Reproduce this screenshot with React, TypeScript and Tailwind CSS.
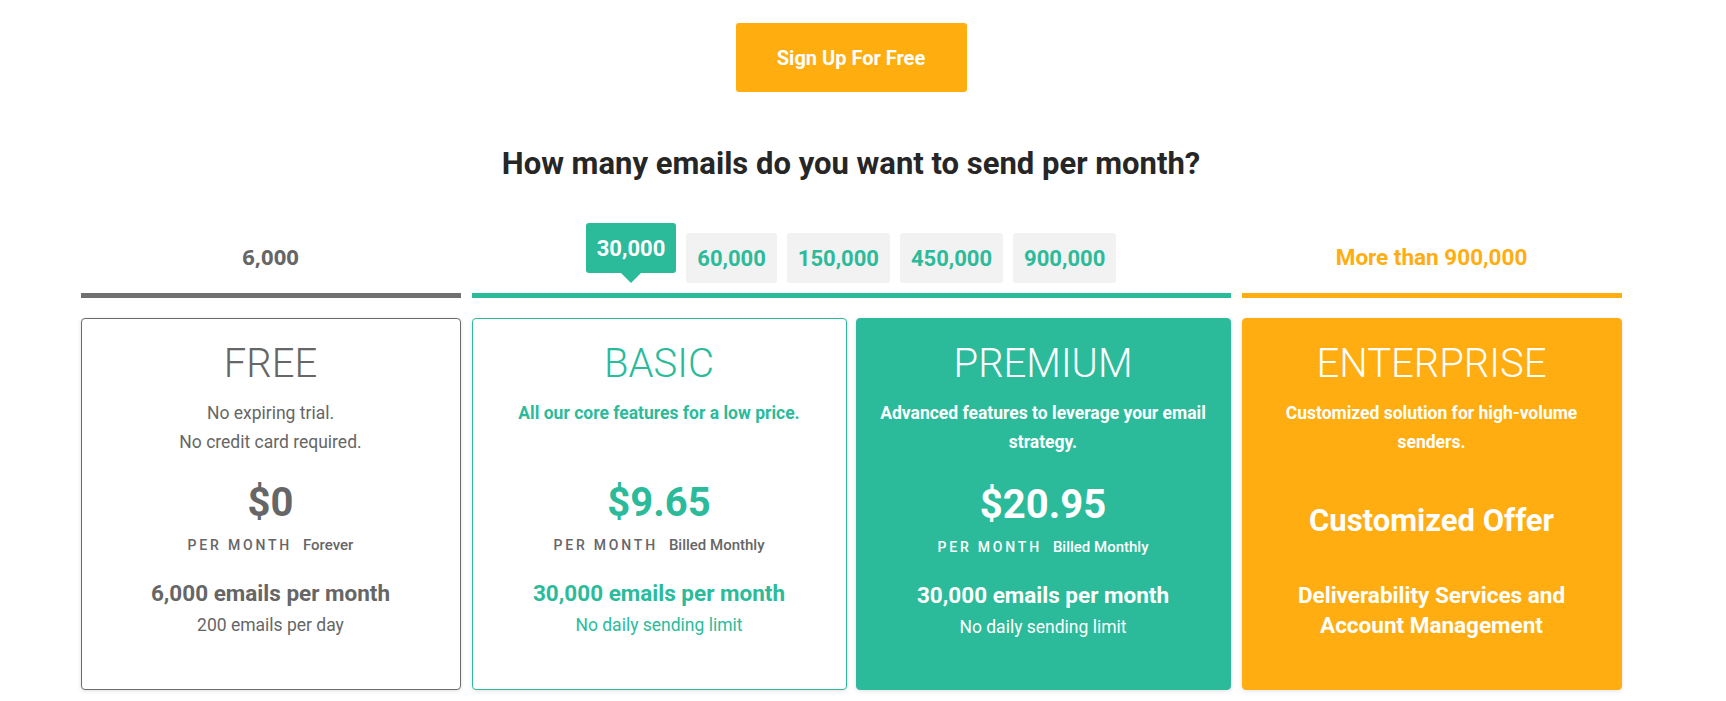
const TEAL = "text-[#2bbb9b]";

const tabs = ["30,000", "60,000", "150,000", "450,000", "900,000"];

interface PlanCardProps {
  title: string;
  lines: string[];
  price?: string;
  billing?: string;
  emails?: string;
  limit?: string;
  variant: "free" | "basic" | "premium" | "enterprise";
}

const PlanCard = ({ title, lines, price, billing, emails, limit, variant }: PlanCardProps) => {
  const box =
    variant === "free"
      ? "border border-[#6b6b6b] bg-white text-[#666]"
      : variant === "basic"
      ? "border border-[#2bbb9b] bg-white text-[#2bbb9b]"
      : variant === "premium"
      ? "border border-[#2bbb9b] bg-[#2bbb9b] text-white"
      : "border border-[#ffad10] bg-[#ffad10] text-white";
  const descWeight = variant === "free" ? "font-normal" : "font-bold";
  const meta = variant === "premium" ? "text-white" : "text-[#666]";

  return (
    <div className={`h-[372px] rounded-[4px] pt-[20px] text-center shadow-[0_1px_4px_rgba(0,0,0,0.12)] ${box}`}>
      <h3 className="text-[40px] font-light leading-[50px]">{title}</h3>
      <div className={`mt-[10px] h-[58px] px-4 text-[17.5px] leading-[29px] ${descWeight}`}>
        {lines.map((l) => (
          <p key={l} className="whitespace-nowrap">{l}</p>
        ))}
      </div>

      {variant === "enterprise" ? (
        <>
          <div className="mt-[44px] text-[31px] font-bold leading-[40px]">Customized Offer</div>
          <div className="mt-[39px] text-[22.5px] font-bold leading-[30px]">
            Deliverability Services and
            <br />
            Account Management
          </div>
        </>
      ) : (
        <>
          <div className={`${variant === "premium" ? "mt-[26px]" : "mt-[24px]"} text-[40px] font-bold leading-[44px]`}>
            {price}
          </div>
          <div className={`mt-[10px] flex items-center justify-center gap-[11px] leading-[20px] ${meta}`}>
            <span className="text-[14px] font-medium tracking-[2.8px]">PER MONTH</span>
            <span className="text-[15px] font-medium">{billing}</span>
          </div>
          <div className="mt-[24px] text-[22.5px] font-bold leading-[28px]">{emails}</div>
          <div className="mt-[6px] text-[17.5px] leading-[24px]">{limit}</div>
        </>
      )}
    </div>
  );
};

export default function App() {
  return (
    <div className="min-h-screen bg-white pr-[24px] font-['Roboto',sans-serif]">
      <div className="flex flex-col items-center pt-[23px]">
        <button className="h-[69px] w-[231px] rounded-[3px] bg-[#ffad0f] text-[20px] font-bold text-white">
          Sign Up For Free
        </button>

        <h2 className="mt-[54px] text-[31px] font-bold leading-[36px] text-[#262626]">
          How many emails do you want to send per month?
        </h2>

        <div className="mt-[41px] grid grid-cols-[380px_759px_380px] gap-x-[11px]">
          {/* free */}
          <div>
            <div className="flex h-[60px] items-end">
              <div className="flex h-[50px] w-full items-center justify-center pb-[4px] font-['Open_Sans',sans-serif] text-[22px] font-bold text-[#666]">
                6,000
              </div>
            </div>
            <div className="mt-[10px] h-[5px] bg-[#707070]" />
            <div className="mt-[20px]">
              <PlanCard
                variant="free"
                title="FREE"
                lines={["No expiring trial.", "No credit card required."]}
                price="$0"
                billing="Forever"
                emails="6,000 emails per month"
                limit="200 emails per day"
              />
            </div>
          </div>

          {/* basic + premium */}
          <div>
            <div className="flex h-[60px] items-end justify-center gap-[10px]">
              {tabs.map((t, i) =>
                i === 0 ? (
                  <div key={t} className="flex flex-col items-center">
                    <div className="flex h-[50px] items-center rounded-[3px] bg-[#2bbb9b] px-[11px] text-[22px] font-bold text-white">
                      {t}
                    </div>
                    <div className="h-0 w-0 border-x-[10px] border-t-[10px] border-x-transparent border-t-[#2bbb9b]" />
                  </div>
                ) : (
                  <div
                    key={t}
                    className={`flex h-[50px] items-center rounded-[3px] bg-[#f2f2f2] px-[11px] text-[22px] font-bold ${TEAL}`}
                  >
                    {t}
                  </div>
                )
              )}
            </div>
            <div className="mt-[10px] h-[5px] bg-[#2bbb9b]" />
            <div className="mt-[20px] grid grid-cols-2 gap-[9px]">
              <PlanCard
                variant="basic"
                title="BASIC"
                lines={["All our core features for a low price."]}
                price="$9.65"
                billing="Billed Monthly"
                emails="30,000 emails per month"
                limit="No daily sending limit"
              />
              <PlanCard
                variant="premium"
                title="PREMIUM"
                lines={["Advanced features to leverage your email", "strategy."]}
                price="$20.95"
                billing="Billed Monthly"
                emails="30,000 emails per month"
                limit="No daily sending limit"
              />
            </div>
          </div>

          {/* enterprise */}
          <div>
            <div className="flex h-[60px] items-end">
              <div className="flex h-[50px] w-full items-center justify-center text-[22.5px] font-bold text-[#ffad10]">
                More than 900,000
              </div>
            </div>
            <div className="mt-[10px] h-[5px] bg-[#ffad10]" />
            <div className="mt-[20px]">
              <PlanCard
                variant="enterprise"
                title="ENTERPRISE"
                lines={["Customized solution for high-volume", "senders."]}
              />
            </div>
          </div>
        </div>
      </div>
    </div>
  );
}
